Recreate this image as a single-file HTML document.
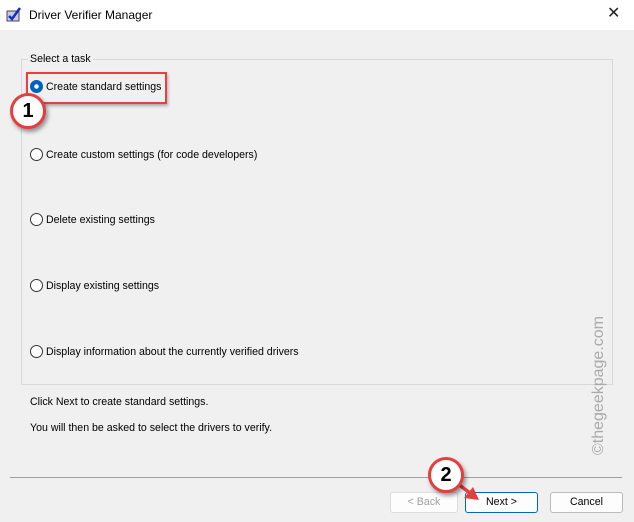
<!DOCTYPE html>
<html><head><style>
body{margin:0;width:634px;height:522px;background:#f0f0f0;font-family:"Liberation Sans",sans-serif;font-size:10.6px;color:#000;position:relative;overflow:hidden}
.a{position:absolute}
.title{left:0;top:0;width:634px;height:30px;background:#fff}
.radio{width:11px;height:11px;border:1px solid #333;border-radius:50%;background:#fff}
.btn{height:19px;border:1px solid #bbb;border-radius:3px;background:#fdfdfd;text-align:center;line-height:19px}
.badge{width:30px;height:30px;border-radius:50%;background:#fff;border:3px solid #e53e3e;box-shadow:2px 3px 4px rgba(0,0,0,.4);text-align:center;line-height:30px;font-weight:bold;font-size:20px}
</style></head><body>
<div class="a title"></div>
<svg class="a" style="left:6px;top:7px" width="16" height="16"><rect x="1" y="4" width="12" height="10" fill="#ccd" stroke="#446"/><path d="M3 9 l3 3 l8-11" stroke="#1030c0" stroke-width="2.5" fill="none"/></svg>
<div class="a" style="left:29px;top:8px;font-size:12px">Driver Verifier Manager</div>
<div class="a" style="left:607px;top:3px;font-size:16px;color:#222">✕</div>
<div class="a" style="left:21px;top:59px;width:590px;height:324px;border:1px solid #d8d8d8"></div>
<div class="a" style="left:28px;top:53px;background:#f0f0f0;padding:0 2px">Select a task</div>
<div class="a" style="left:26px;top:72px;width:137px;height:28px;border:2px solid #e84040;box-shadow:1px 2px 3px rgba(0,0,0,.3)"></div>
<div class="a radio" style="left:30px;top:80px;border-color:#0060c0;background:radial-gradient(circle,#fff 0 2px,#0060c0 2.5px)"></div>
<div class="a" style="left:46px;top:81px">Create standard settings</div>
<div class="a radio" style="left:30px;top:148px"></div><div class="a" style="left:46px;top:149px">Create custom settings (for code developers)</div>
<div class="a radio" style="left:30px;top:213px"></div><div class="a" style="left:46px;top:214px">Delete existing settings</div>
<div class="a radio" style="left:30px;top:279px"></div><div class="a" style="left:46px;top:280px">Display existing settings</div>
<div class="a radio" style="left:30px;top:345px"></div><div class="a" style="left:46px;top:346px">Display information about the currently verified drivers</div>
<div class="a" style="left:30px;top:396px">Click Next to create standard settings.</div>
<div class="a" style="left:30px;top:422px">You will then be asked to select the drivers to verify.</div>
<div class="a" style="left:590px;top:455px;transform:rotate(-90deg);transform-origin:0 0;color:#aaa;font-size:16px;white-space:nowrap">©thegeekpage.com</div>
<div class="a" style="left:10px;top:477px;width:612px;height:1px;background:#a0a0a0"></div>
<div class="a btn" style="left:390px;top:492px;width:66px;color:#a0a0a0;border-color:#ddd">&lt; Back</div>
<div class="a btn" style="left:465px;top:492px;width:71px;border-color:#0067c0">Next &gt;</div>
<div class="a btn" style="left:550px;top:492px;width:71px">Cancel</div>
<svg class="a" style="left:440px;top:470px" width="50" height="40"><path d="M10 8 L30 23" stroke="#e53e3e" stroke-width="3.5"/><path d="M39 30 L24 28 L33 17 Z" fill="#e53e3e"/></svg>
<div class="a badge" style="left:10px;top:93px">1</div>
<div class="a badge" style="left:428px;top:457px">2</div>
</body></html>
